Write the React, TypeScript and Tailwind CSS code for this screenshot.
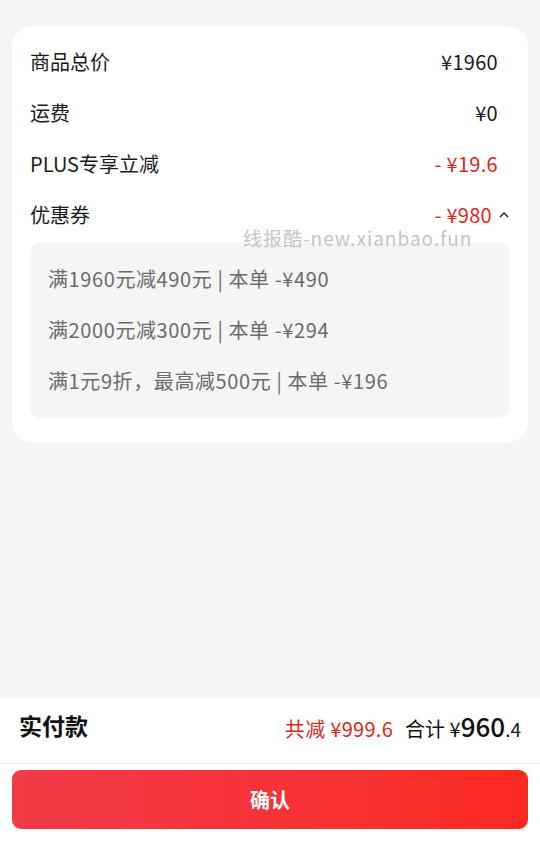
const font = { fontFamily: '"Noto Sans CJK SC", "Noto Sans", sans-serif' };

const rows = [
  { label: "商品总价", value: "¥1960", red: false },
  { label: "运费", value: "¥0", red: false },
  { label: "PLUS专享立减", value: "- ¥19.6", red: true },
];

const coupons = [
  "满1960元减490元 | 本单 -¥490",
  "满2000元减300元 | 本单 -¥294",
  "满1元9折，最高减500元 | 本单 -¥196",
];

export default function App() {
  return (
    <div className="flex h-[841px] w-full flex-col bg-[#f5f5f5]" style={font}>
      {/* price detail card */}
      <div className="px-3 pt-[26px]">
        <div className="relative rounded-[20px] bg-white px-[18px] pt-3 pb-[24px]">
          {rows.map((r) => (
            <div key={r.label} className="flex h-[51px] items-center justify-between pr-3 pb-1 text-[20px] text-[#1a1a1a]">
              <span>{r.label}</span>
              <span className={r.red ? "tracking-[0.3px] text-[#e0261c]" : "tracking-[0.3px]"}>{r.value}</span>
            </div>
          ))}
          <div className="mb-px flex h-[51px] items-center justify-between pr-3 pb-1 text-[20px] text-[#1a1a1a]">
            <span>优惠券</span>
            <span className="flex items-center">
              <span className="tracking-[0.3px] text-[#e0261c]">- ¥980</span>
              <svg className="-mr-3 ml-1.5 h-3 w-3" viewBox="0 0 12 12" fill="none" stroke="#222" strokeWidth="1.4">
                <polyline points="2,8 6,4 10,8" />
              </svg>
            </span>
          </div>

          {/* expanded coupons */}
          <div className="rounded-[10px] bg-[#f5f5f5] px-[18px] py-[11px]">
            {coupons.map((c) => (
              <div key={c} className="flex h-[51px] items-center pb-0.5 text-[20px] tracking-[0.6px] text-[#6b6b6b]">
                {c}
              </div>
            ))}
          </div>

          <span className="absolute left-[231px] top-[198px] text-[19px] tracking-[1px] text-[#c4c4c4]">
            线报酷-new.xianbao.fun
          </span>
        </div>
      </div>

      <div className="flex-1" />

      {/* bottom bar */}
      <div className="bg-white">
        <div className="flex h-[66px] items-center justify-between border-b border-[#f0f0f0] pb-[10px] pl-[19px] pr-[19px]">
          <span className="text-[23px] font-bold text-[#111]">实付款</span>
          <div className="flex items-baseline">
            <span className="text-[20px] tracking-[0.3px] text-[#d8281e]">共减 ¥999.6</span>
            <span className="ml-3 text-[20px] text-[#111]">合计 ¥</span>
            <span className="text-[26px] font-medium text-[#111]">960</span>
            <span className="text-[19px] text-[#111]">.4</span>
          </div>
        </div>
        <div className="px-3 pt-1.5 pb-3">
          <button className="flex h-[59px] w-full items-center justify-center rounded-[9px] bg-gradient-to-r from-[#f23a48] to-[#fa2a1f] text-[20px] font-bold text-white">
            确认
          </button>
        </div>
      </div>
    </div>
  );
}
